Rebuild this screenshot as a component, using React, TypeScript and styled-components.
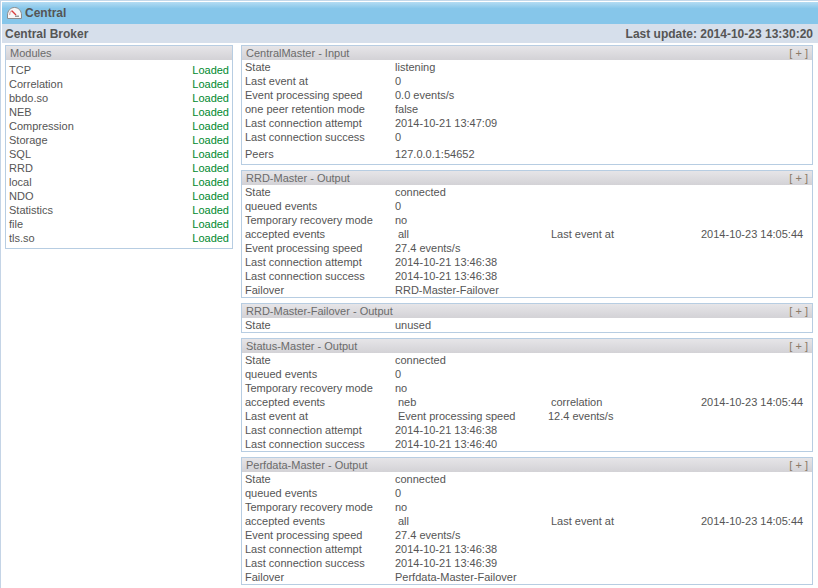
import React from "react";
import styled, { createGlobalStyle } from "styled-components";

const Global = createGlobalStyle`
  html, body { margin: 0; padding: 0; background: #fff; }
  body { font-family: "Liberation Sans", Arial, sans-serif; font-size: 11px; color: #555; }
`;

const Page = styled.div`
  width: 818px;
  height: 588px;
  overflow: hidden;
  box-sizing: border-box;
  background: #fff;
  border-top: 1px solid #c4d8ea;
  border-left: 1px solid #c4d4e6;
  padding: 1px 0 0 1px;
`;

const TitleBar = styled.div`
  height: 22px;
  box-sizing: border-box;
  display: flex;
  align-items: center;
  gap: 3px;
  padding-left: 5px;
  font-size: 12px;
  font-weight: bold;
  color: #555;
  background: linear-gradient(#b4dcf3, #86c6ea 30%, #86c6ea);
`;

const SubBar = styled.div`
  height: 19px;
  display: flex;
  align-items: center;
  justify-content: space-between;
  padding: 0 5px 0 3px;
  font-size: 12px;
  font-weight: bold;
  color: #555;
  background: #d6dfeb;
`;

const Body = styled.div`
  display: flex;
  align-items: flex-start;
  padding: 2px 5px 0 3px;
  gap: 8px;
`;

const LeftCol = styled.div`
  width: 228px;
  flex: none;
`;

const RightCol = styled.div`
  width: 572px;
  flex: none;
  display: flex;
  flex-direction: column;
  gap: 5px;
`;

const Panel = styled.section`
  border: 1px solid #b7cde2;
  box-sizing: border-box;
  background: #fff;
`;

const PanelHead = styled.div`
  height: 14px;
  display: flex;
  align-items: center;
  justify-content: space-between;
  padding: 0 4px;
  background: linear-gradient(#e6e5e8, #d3d2d6);
  color: #6b6b6b;
`;

const Toggle = styled.span`
  color: #8a7a66;
`;

const Rows = styled.div<{ $bottom?: number }>`
  padding: 0 3px ${(p) => p.$bottom ?? 0}px;
`;

const Row = styled.div<{ $height?: number }>`
  height: ${(p) => p.$height ?? 14}px;
  line-height: 14px;
  display: grid;
  grid-template-columns: 150px 156px 150px 1fr;
  white-space: nowrap;
  align-items: end;
`;

const Indented = styled.span`
  padding-left: 3px;
`;

const ModuleList = styled.div`
  padding: 3px;
`;

const ModuleRow = styled.div`
  height: 14px;
  line-height: 14px;
  display: flex;
  justify-content: space-between;
`;

const Loaded = styled.span`
  color: #008a2e;
`;

const Gauge = () => (
  <svg width="15" height="12" viewBox="0 0 15 12" aria-hidden="true">
    <path d="M0.5 11.5 V8 C0.5 3.8 3.5 0.5 7.5 0.5 C11.5 0.5 14.5 3.8 14.5 8 V11.5 Z" fill="#f8f8f8" stroke="#8c8c8c" strokeWidth="1" />
    <path d="M2.6 8 A5 5 0 0 1 5 3.4" fill="none" stroke="#e0b0b0" strokeWidth="1.2" />
    <path d="M4.8 3.8 L9 8" stroke="#d83a3a" strokeWidth="1.3" />
    <rect x="8" y="8.5" width="4" height="1.5" fill="#9a9a9a" />
  </svg>
);

const modules = ["TCP", "Correlation", "bbdo.so", "NEB", "Compression", "Storage", "SQL", "RRD", "local", "NDO", "Statistics", "file", "tls.so"];

type Cells = [string, string, string?, string?];
const kv = (a: string, b: string): Cells => [a, b];

const data: { title: string; rows: Cells[] }[] = [
  {
    title: "RRD-Master - Output",
    rows: [
      kv("State", "connected"), kv("queued events", "0"), kv("Temporary recovery mode", "no"),
      ["accepted events", " all", "Last event at", "2014-10-23 14:05:44"],
      kv("Event processing speed", "27.4 events/s"), kv("Last connection attempt", "2014-10-21 13:46:38"),
      kv("Last connection success", "2014-10-21 13:46:38"), kv("Failover", "RRD-Master-Failover"),
    ],
  },
  { title: "RRD-Master-Failover - Output", rows: [kv("State", "unused")] },
  {
    title: "Status-Master - Output",
    rows: [
      kv("State", "connected"), kv("queued events", "0"), kv("Temporary recovery mode", "no"),
      ["accepted events", " neb", "correlation", "2014-10-23 14:05:44"],
      ["Last event at", " Event processing speed", "12.4 events/s"],
      kv("Last connection attempt", "2014-10-21 13:46:38"), kv("Last connection success", "2014-10-21 13:46:40"),
    ],
  },
  {
    title: "Perfdata-Master - Output",
    rows: [
      kv("State", "connected"), kv("queued events", "0"), kv("Temporary recovery mode", "no"),
      ["accepted events", " all", "Last event at", "2014-10-23 14:05:44"],
      kv("Event processing speed", "27.4 events/s"), kv("Last connection attempt", "2014-10-21 13:46:38"),
      kv("Last connection success", "2014-10-21 13:46:39"), kv("Failover", "Perfdata-Master-Failover"),
    ],
  },
];

const Third = styled.span<{ $shift?: boolean }>`
  margin-left: ${(p) => (p.$shift ? "-3px" : "0")};
`;

const renderRow = (c: Cells, i: number) => (
  <Row key={i}>
    <span>{c[0]}</span>
    {c[1].startsWith(" ") ? <Indented>{c[1].trim()}</Indented> : <span>{c[1]}</span>}
    {c[2] && <Third $shift={c[2].includes("events/s")}>{c[2]}</Third>}
    {c[3] && <span>{c[3]}</span>}
  </Row>
);

const Head = ({ title }: { title: string }) => (
  <PanelHead>
    <span>{title}</span>
    <Toggle>[ + ]</Toggle>
  </PanelHead>
);

export default function App() {
  return (
    <Page>
      <Global />
      <TitleBar>
        <Gauge />
        <span>Central</span>
      </TitleBar>
      <SubBar>
        <span>Central Broker</span>
        <span>Last update: 2014-10-23 13:30:20</span>
      </SubBar>
      <Body>
        <LeftCol>
          <Panel>
            <PanelHead><span>Modules</span></PanelHead>
            <ModuleList>
              {modules.map((m) => (
                <ModuleRow key={m}>
                  <span>{m}</span>
                  <Loaded>Loaded</Loaded>
                </ModuleRow>
              ))}
            </ModuleList>
          </Panel>
        </LeftCol>
        <RightCol>
          <Panel>
            <Head title="CentralMaster - Input" />
            <Rows $bottom={3}>
              {[
                kv("State", "listening"), kv("Last event at", "0"), kv("Event processing speed", "0.0 events/s"),
                kv("one peer retention mode", "false"), kv("Last connection attempt", "2014-10-21 13:47:09"),
                kv("Last connection success", "0"),
              ].map(renderRow)}
              <Row $height={17}>
                <span>Peers</span>
                <span>127.0.0.1:54652</span>
              </Row>
            </Rows>
          </Panel>
          {data.map((p) => (
            <Panel key={p.title}>
              <Head title={p.title} />
              <Rows>{p.rows.map(renderRow)}</Rows>
            </Panel>
          ))}
        </RightCol>
      </Body>
    </Page>
  );
}
